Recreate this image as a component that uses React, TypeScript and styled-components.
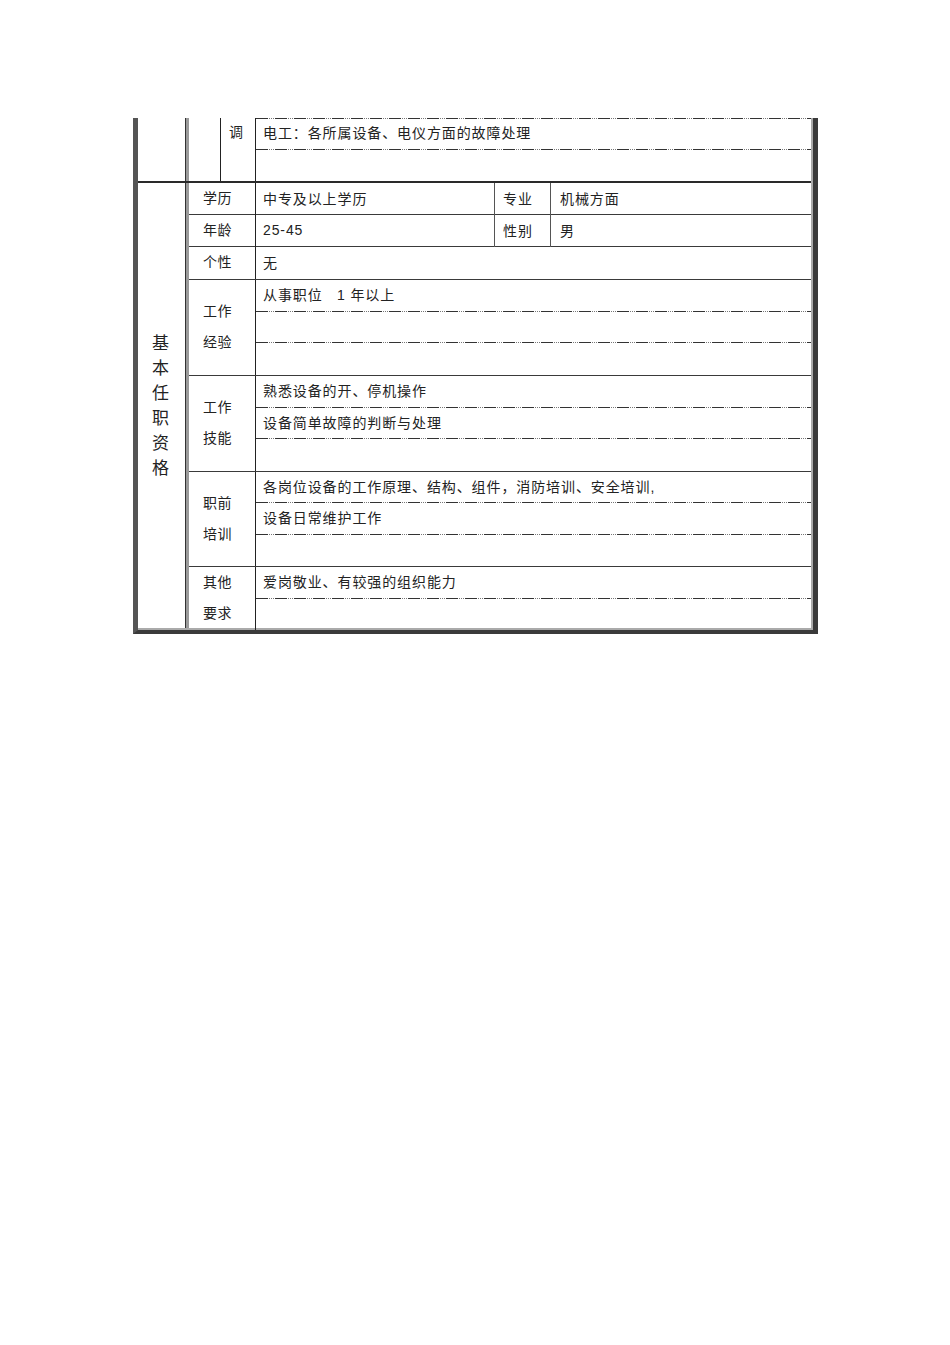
import React from "react";
import styled, { createGlobalStyle } from "styled-components";

const Global = createGlobalStyle`
  html, body { margin: 0; padding: 0; background: #fff; }
  body { font-family: "Liberation Sans", "Noto Sans CJK SC", sans-serif; color: #222; }
`;

const DASH =
  "repeating-linear-gradient(90deg, #333 0 12px, #fff 12px 13px, #777 13px 14px, #fff 14px 15px, #777 15px 16px, #fff 16px 17px, #777 17px 18px, #fff 18px 19px)";

const Page = styled.div`
  width: 950px;
  min-height: 1345px;
  padding: 118px 0 0 133px;
  box-sizing: border-box;
  background: #fff;
`;

const Sheet = styled.div`
  width: 685px;
  box-sizing: border-box;
  border-left: 5px solid #555;
  border-right: 5px solid #3a3a3a;
  border-bottom: 4px solid #3a3a3a;
`;

const Inner = styled.div`
  border-right: 2px solid #aaa;
  border-bottom: 2px solid #aaa;
`;

const Section = styled.div<{ $divider?: boolean }>`
  display: grid;
  grid-template-columns: 48px 1fr;
  border-bottom: ${(p) => (p.$divider ? "2px solid #2a2a2a" : "none")};
`;

const SideCol = styled.div`
  border-right: 1px solid #333;
  display: flex;
  align-items: center;
  justify-content: center;
`;

const VerticalTitle = styled.div`
  width: 17px;
  font-size: 17px;
  line-height: 25px;
  text-align: center;
  padding-right: 2px;
`;

const Body = styled.div`
  border-left: 3px solid #9a9a9a;
  display: flex;
  flex-direction: column;
`;

const TopBody = styled.div`
  border-left: 3px solid #9a9a9a;
  display: grid;
  grid-template-columns: 32px 35px 1fr;
  height: 63px;
`;

const BlankCell = styled.div`
  border-right: 1px solid #222;
`;

const TiaoCell = styled.div`
  border-right: 1px solid #222;
  font-size: 14px;
  line-height: 29px;
  padding-left: 8px;
`;

const Row = styled.div<{ $h: number; $last?: boolean }>`
  display: grid;
  grid-template-columns: 67px 1fr;
  height: ${(p) => p.$h}px;
  box-sizing: border-box;
  border-bottom: ${(p) => (p.$last ? "none" : "1px solid #3a3a3a")};
`;

const Label = styled.div`
  border-right: 1px solid #222;
  display: flex;
  flex-direction: column;
  justify-content: center;
  padding-left: 14px;
  padding-bottom: 1px;
  font-size: 14px;
  line-height: 31px;
  letter-spacing: 0.5px;
`;

const Content = styled.div<{ $topDash?: boolean }>`
  display: flex;
  flex-direction: column;
  ${(p) => (p.$topDash ? `background: ${DASH} top left / 100% 1px no-repeat;` : "")}
`;

const Sub = styled.div`
  flex: 1;
  display: flex;
  align-items: center;
  padding-left: 7px;
  padding-bottom: 3px;
  font-size: 14px;
  letter-spacing: 0.9px;
  white-space: pre;
  &:not(:last-child) {
    background: ${DASH} bottom left / 100% 1px no-repeat;
  }
`;

const Split = styled.div`
  display: grid;
  grid-template-columns: 239px 56px 1fr;
`;

const Cell = styled.div<{ $line?: boolean; $pad?: number }>`
  display: flex;
  align-items: center;
  padding-left: ${(p) => p.$pad ?? 7}px;
  padding-bottom: 2px;
  font-size: 14px;
  letter-spacing: 0.9px;
  border-right: ${(p) => (p.$line ? "1px solid #555" : "none")};
`;

type Block = { label: string[]; lines: string[]; h: number; last?: boolean };

const blocks: Block[] = [
  { label: ["个性"], lines: ["无"], h: 33 },
  { label: ["工作", "经验"], lines: ["从事职位   1 年以上", "", ""], h: 96 },
  { label: ["工作", "技能"], lines: ["熟悉设备的开、停机操作", "设备简单故障的判断与处理", ""], h: 96 },
  {
    label: ["职前", "培训"],
    lines: ["各岗位设备的工作原理、结构、组件，消防培训、安全培训,", "设备日常维护工作", ""],
    h: 95,
  },
  { label: ["其他", "要求"], lines: ["爱岗敬业、有较强的组织能力", ""], h: 61, last: true },
];

export default function App() {
  return (
    <>
      <Global />
      <Page>
        <Sheet>
          <Inner>
            <Section $divider>
              <SideCol />
              <TopBody>
                <BlankCell />
                <TiaoCell>调</TiaoCell>
                <Content $topDash>
                  <Sub>电工：各所属设备、电仪方面的故障处理</Sub>
                  <Sub />
                </Content>
              </TopBody>
            </Section>
            <Section>
              <SideCol>
                <VerticalTitle>基本任职资格</VerticalTitle>
              </SideCol>
              <Body>
                <Row $h={32}>
                  <Label>学历</Label>
                  <Split>
                    <Cell $line>中专及以上学历</Cell>
                    <Cell $line $pad={8}>专业</Cell>
                    <Cell $pad={9}>机械方面</Cell>
                  </Split>
                </Row>
                <Row $h={32}>
                  <Label>年龄</Label>
                  <Split>
                    <Cell $line>25-45</Cell>
                    <Cell $line $pad={8}>性别</Cell>
                    <Cell $pad={9}>男</Cell>
                  </Split>
                </Row>
                {blocks.map((b) => (
                  <Row key={b.label.join("")} $h={b.h} $last={b.last}>
                    <Label>
                      {b.label.map((l) => (
                        <span key={l}>{l}</span>
                      ))}
                    </Label>
                    <Content>
                      {b.lines.map((t, i) => (
                        <Sub key={i}>{t}</Sub>
                      ))}
                    </Content>
                  </Row>
                ))}
              </Body>
            </Section>
          </Inner>
        </Sheet>
      </Page>
    </>
  );
}
